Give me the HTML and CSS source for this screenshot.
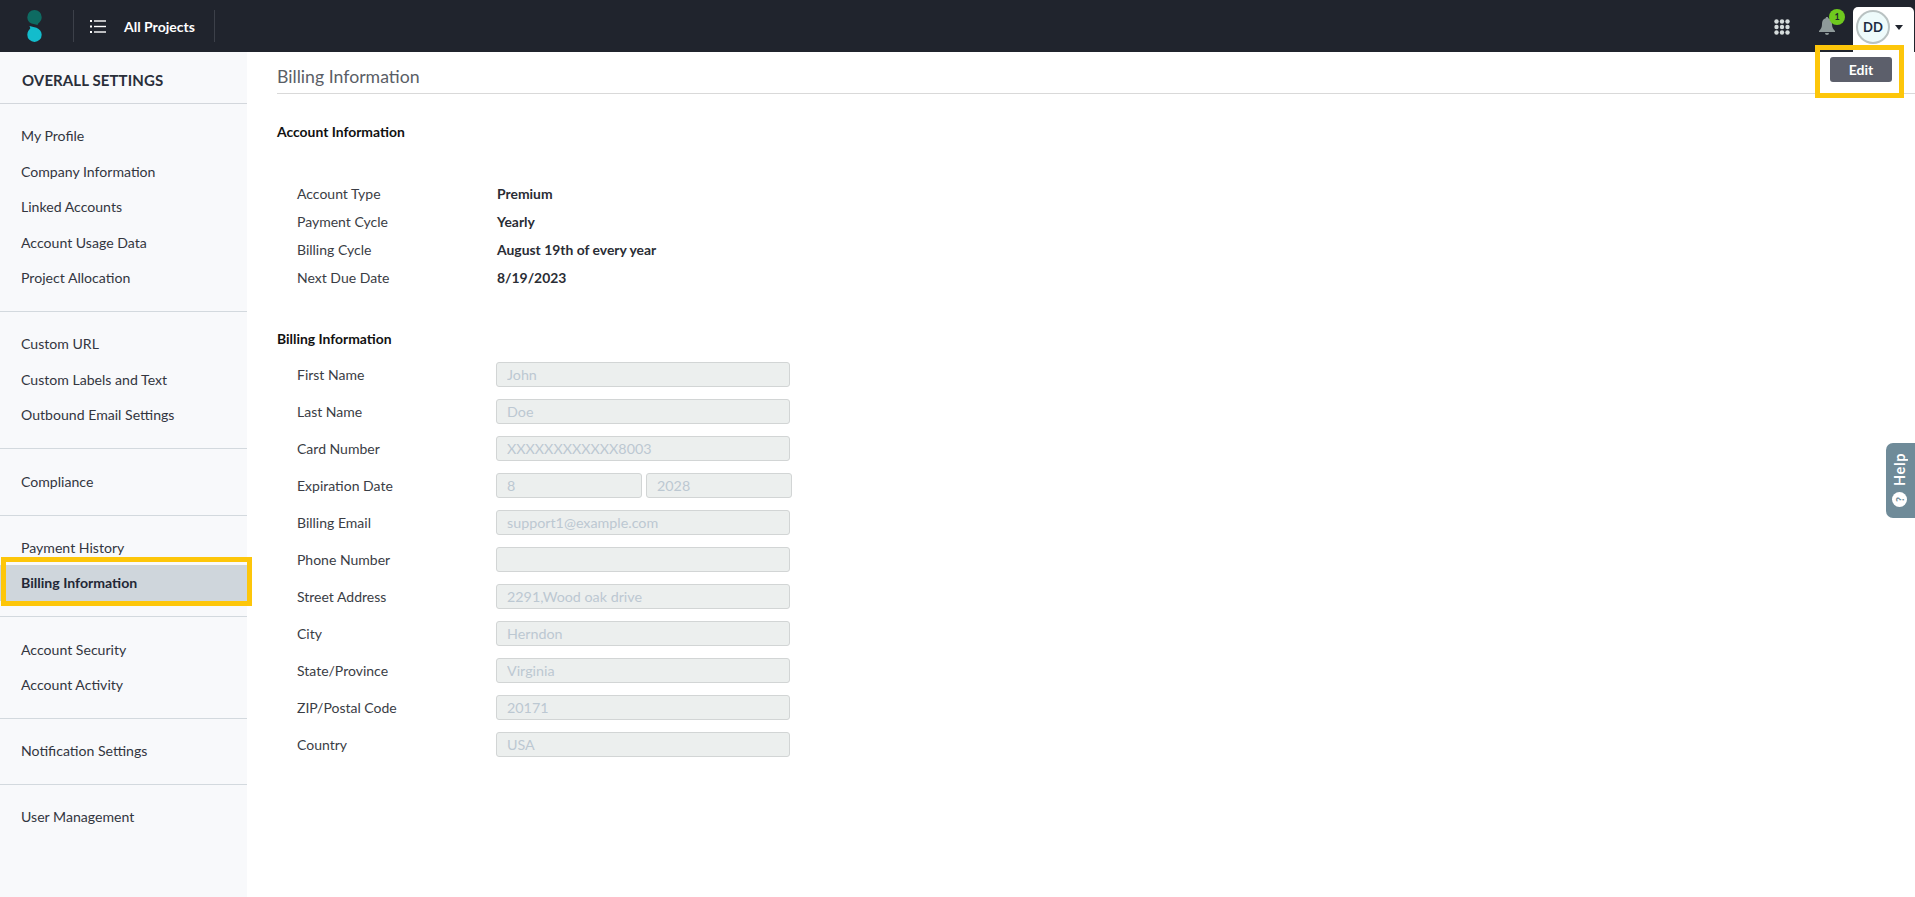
FILE: index.html
```html
<!DOCTYPE html>
<html lang="en">
<head>
<meta charset="utf-8">
<title>Billing Information</title>
<link rel="stylesheet" href="styles.css">
</head>
<body>
<header class="topbar">
  <div class="logo-cell">
    <svg class="logo" width="15" height="32" viewBox="0 0 15 32">
      <path d="M7.500 0a7.200 7.200 0 0 1 7.200 7.200c0 2.800-1.600 4.800-3.300 6L10.500 15 4.500 13.500C1.800 12.500 0.300 10 0.300 7.200A7.200 7.200 0 0 1 7.500 0z" fill="#0e6b62"/>
      <path d="M2.500 16l7 1.800c3 1.500 5.200 3.800 5.200 6.900a7.200 7.200 0 0 1-14.400 0c0-3.200 2-5 3-6.500z" fill="#13bccc"/>
    </svg>
  </div>
  <div class="projects-cell">
    <svg class="list-icon" width="16" height="13" viewBox="0 0 16 13">
      <g fill="#fff"><rect x="0" y="0" width="2" height="2"/><rect x="0" y="5.500" width="2" height="2"/><rect x="0" y="11" width="2" height="2"/><rect x="4" y="0.300" width="12" height="1.400"/><rect x="4" y="5.800" width="12" height="1.400"/><rect x="4" y="11.300" width="12" height="1.400"/></g>
    </svg>
    <span class="projects-label">All Projects</span>
  </div>
  <div class="topbar-right">
    <svg class="grid-icon" width="16" height="16" viewBox="0 0 16 16">
      <g fill="#d5dcdc"><circle cx="2.500" cy="2.500" r="2.200"/><circle cx="8" cy="2.500" r="2.200"/><circle cx="13.500" cy="2.500" r="2.200"/><circle cx="2.500" cy="8" r="2.200"/><circle cx="8" cy="8" r="2.200"/><circle cx="13.500" cy="8" r="2.200"/><circle cx="2.500" cy="13.500" r="2.200"/><circle cx="8" cy="13.500" r="2.200"/><circle cx="13.500" cy="13.500" r="2.200"/></g>
    </svg>
    <div class="bell-wrap">
      <svg width="16" height="18" viewBox="0 0 16 18"><path d="M8 0c.8 0 1.300.5 1.300 1.300C12 2 13 4.300 13 7c0 3.500 1 5 3 7v1H0v-1c2-2 3-3.500 3-7 0-2.700 1-5 3.700-5.700C6.700.5 7.200 0 8 0zM6 16h4a2 2 0 0 1-4 0z" fill="#8f9a9a"/></svg>
      <span class="bell-badge">1</span>
    </div>
    <div class="user-tab">
      <span class="avatar">DD</span>
      <span class="caret"></span>
    </div>
  </div>
</header>

<div class="layout">
  <nav class="sidebar">
    <h2 class="sidebar-title">OVERALL SETTINGS</h2>
    <ul class="nav-group">
      <li class="nav-item">My Profile</li>
      <li class="nav-item">Company Information</li>
      <li class="nav-item">Linked Accounts</li>
      <li class="nav-item">Account Usage Data</li>
      <li class="nav-item">Project Allocation</li>
    </ul>
    <ul class="nav-group">
      <li class="nav-item">Custom URL</li>
      <li class="nav-item">Custom Labels and Text</li>
      <li class="nav-item">Outbound Email Settings</li>
    </ul>
    <ul class="nav-group">
      <li class="nav-item">Compliance</li>
    </ul>
    <ul class="nav-group">
      <li class="nav-item">Payment History</li>
      <li class="nav-item nav-item-active">Billing Information</li>
    </ul>
    <ul class="nav-group">
      <li class="nav-item">Account Security</li>
      <li class="nav-item">Account Activity</li>
    </ul>
    <ul class="nav-group">
      <li class="nav-item">Notification Settings</li>
    </ul>
    <ul class="nav-group nav-group-last">
      <li class="nav-item">User Management</li>
    </ul>
  </nav>

  <main class="content">
    <div class="page-head">
      <h1 class="page-title">Billing Information</h1>
      <button class="edit-btn" type="button">Edit</button>
    </div>

    <h3 class="section-title section-account">Account Information</h3>
    <dl class="info-list">
      <div class="info-row"><dt>Account Type</dt><dd>Premium</dd></div>
      <div class="info-row"><dt>Payment Cycle</dt><dd>Yearly</dd></div>
      <div class="info-row"><dt>Billing Cycle</dt><dd>August 19th of every year</dd></div>
      <div class="info-row"><dt>Next Due Date</dt><dd>8/19/2023</dd></div>
    </dl>

    <h3 class="section-title section-billing">Billing Information</h3>
    <form class="billing-form">
      <div class="form-row"><label>First Name</label><input class="field" disabled value="John"></div>
      <div class="form-row"><label>Last Name</label><input class="field" disabled value="Doe"></div>
      <div class="form-row"><label>Card Number</label><input class="field" disabled value="XXXXXXXXXXXX8003"></div>
      <div class="form-row"><label>Expiration Date</label>
        <div class="split"><input class="field field-half" disabled value="8"><input class="field field-half" disabled value="2028"></div>
      </div>
      <div class="form-row"><label>Billing Email</label><input class="field" disabled value="support1@example.com"></div>
      <div class="form-row"><label>Phone Number</label><input class="field" disabled value=""></div>
      <div class="form-row"><label>Street Address</label><input class="field" disabled value="2291,Wood oak drive"></div>
      <div class="form-row"><label>City</label><input class="field" disabled value="Herndon"></div>
      <div class="form-row"><label>State/Province</label><input class="field" disabled value="Virginia"></div>
      <div class="form-row"><label>ZIP/Postal Code</label><input class="field" disabled value="20171"></div>
      <div class="form-row"><label>Country</label><input class="field" disabled value="USA"></div>
    </form>
  </main>
</div>

<div class="mark mark-nav"></div>
<div class="mark mark-edit"></div>

<aside class="help-tab">
  <span class="help-text">Help</span>
  <span class="help-q">?</span>
</aside>
</body>
</html>
```

FILE: styles.css
```css
* { box-sizing: border-box; }
html, body { margin: 0; padding: 0; height: 100%; }
body {
  font-family: "Lato", "Liberation Sans", sans-serif;
  font-size: 14px;
  color: #2c3038;
  background: #fff;
  overflow: hidden;
  display: flex;
  flex-direction: column;
}

/* top bar */
.topbar {
  height: 52px;
  flex: none;
  background: #20242d;
  display: flex;
  align-items: center;
}
.logo-cell {
  width: 74px;
  height: 32px;
  padding-left: 27px;
  border-right: 1px solid #3c4049;
  display: flex;
  align-items: center;
}
.projects-cell {
  width: 141px;
  height: 32px;
  padding-left: 16px;
  border-right: 1px solid #3c4049;
  display: flex;
  align-items: center;
  gap: 18px;
}
.projects-label { color: #fff; font-weight: 700; font-size: 14px; }
.topbar-right {
  margin-left: auto;
  align-self: flex-end;
  height: 45px;
  display: flex;
  align-items: center;
  padding-right: 1px;
}
.grid-icon { margin: 0 0 5px 0; }
.bell-wrap {
  position: relative;
  margin: 0 16px 7px 29px;
  width: 18px;
  height: 18px;
}
.bell-badge {
  position: absolute;
  top: -8px;
  left: 10px;
  width: 16px;
  height: 16px;
  border-radius: 50%;
  background: #6fc91e;
  color: #20242d;
  font-size: 9px;
  font-weight: 700;
  text-align: center;
  line-height: 16px;
}
.user-tab {
  width: 61px;
  height: 45px;
  background: #fff;
  border-radius: 5px 5px 0 0;
  padding-left: 3px;
  padding-bottom: 5px;
  display: flex;
  align-items: center;
}
.avatar {
  width: 34px;
  height: 34px;
  border-radius: 50%;
  border: 2px solid #b9c2c2;
  background: #eefbfb;
  color: #1d2b3f;
  font-weight: 700;
  font-size: 13px;
  display: flex;
  align-items: center;
  justify-content: center;
}
.caret {
  margin-left: 5px;
  border-left: 4px solid transparent;
  border-right: 4px solid transparent;
  border-top: 5px solid #20242d;
}

/* layout */
.layout { flex: 1; display: flex; min-height: 0; }

/* sidebar */
.sidebar {
  width: 247px;
  flex: none;
  background: #f8f9fb;
}
.sidebar-title {
  margin: 0;
  height: 52px;
  padding-left: 22px;
  border-bottom: 1px solid #d3d7dc;
  font-size: 15px;
  font-weight: 700;
  color: #2a2f3a;
  line-height: 56px;
  letter-spacing: 0.1px;
}
.nav-group {
  list-style: none;
  margin: 0;
  padding: 14.300px 0 15.400px;
  border-bottom: 1px solid #d3d9de;
}
.nav-group-last { border-bottom: 0; }
.nav-item {
  height: 35.500px;
  line-height: 35.500px;
  padding-left: 21px;
  font-size: 14.100px;
  color: #33363f;
}
.nav-item-active {
  background: #cfd6dc;
  font-weight: 700;
  color: #232736;
}

/* main */
.content { flex: 1; padding: 0 0 0 30px; min-width: 0; }
.page-head {
  height: 42px;
  border-bottom: 1px solid #d9d9d9;
  display: flex;
  justify-content: space-between;
  align-items: flex-start;
  padding-top: 5px;
}
.page-title {
  margin: 9px 0 0;
  font-size: 17.700px;
  font-weight: 400;
  color: #5a5e66;
  line-height: 22px;
}
.edit-btn {
  width: 62px;
  height: 25px;
  margin: 0 23px 0 0;
  border: 0;
  border-radius: 3px;
  background: #5c5f6b;
  color: #fff;
  font: 700 14px "Lato", "Liberation Sans", sans-serif;
  padding: 0;
}
.section-title {
  margin: 0;
  font-size: 13.900px;
  font-weight: 700;
  color: #111;
  line-height: 20px;
}
.section-account { padding-top: 27.500px; }
.section-billing { padding-top: 38px; }

.info-list { margin: 37.500px 0 0; padding-left: 20px; }
.info-row { display: flex; height: 28px; align-items: center; }
.info-row dt { width: 200px; font-size: 14px; color: #3a3d45; }
.info-row dd { margin: 0; font-size: 13.900px; font-weight: 700; color: #2a2d35; }

.billing-form { margin-top: 13px; padding-left: 20px; }
.form-row { display: flex; height: 37px; align-items: flex-start; }
.form-row label {
  width: 199px;
  flex: none;
  line-height: 25px;
  font-size: 14px;
  color: #3a3d45;
}
.field {
  width: 294px;
  height: 25px;
  padding: 0 10px;
  border: 1px solid #d2d5d5;
  border-radius: 3px;
  background: #ecefee;
  color: #bcc8d2;
  -webkit-text-fill-color: #bcc8d2;
  opacity: 1;
  font: 400 14.300px "Lato", "Liberation Sans", sans-serif;
}
.split { display: flex; gap: 4px; }
.field-half { width: 146px; }

/* annotation frames */
.mark {
  position: absolute;
  border: 5px solid #fdc60a;
  pointer-events: none;
}
.mark-nav { left: 1px; top: 557px; width: 251px; height: 49px; }
.mark-edit { left: 1815px; top: 45px; width: 89px; height: 53px; }

/* help tab */
.help-tab {
  position: absolute;
  right: 0;
  top: 443px;
  width: 29px;
  height: 75px;
  background: #6f8b99;
  border-radius: 7px 0 0 7px;
  color: #fff;
  display: flex;
  flex-direction: column;
  align-items: center;
  padding: 10px 2px 0 0;
}
.help-text {
  writing-mode: vertical-rl;
  transform: rotate(180deg);
  font-size: 14.500px;
  font-weight: 700;
  letter-spacing: 0.6px;
  line-height: 16px;
}
.help-q {
  margin-top: 6px;
  width: 15px;
  height: 15px;
  flex: none;
  border-radius: 50%;
  background: #fff;
  color: #6f8b99;
  font-size: 11px;
  font-weight: 700;
  line-height: 15px;
  text-align: center;
  transform: rotate(-90deg);
}
```
